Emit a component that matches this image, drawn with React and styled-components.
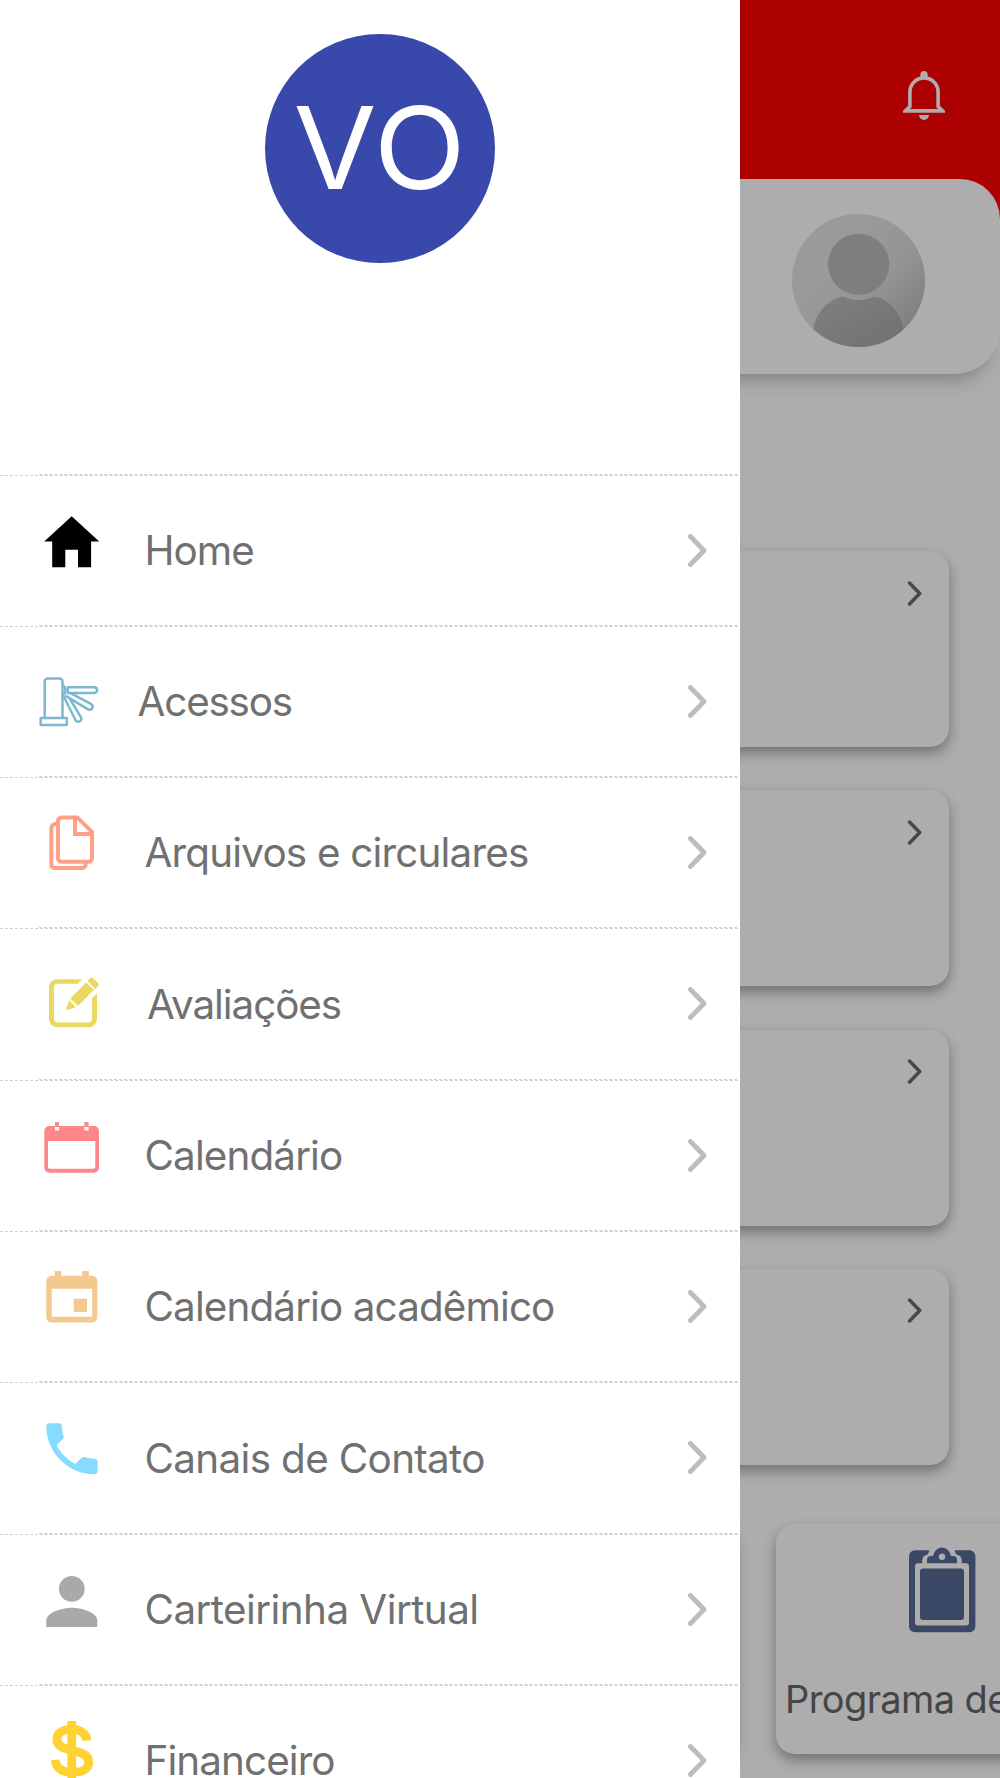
import React from "react";
import styled, { createGlobalStyle } from "styled-components";


const GlobalStyle = createGlobalStyle`
	* {
		box-sizing: border-box;
	}

	body {
		margin: 0;
		background: #fff;
		font-family: Inter, "Liberation Sans", sans-serif;
	}
`

const Screen = styled.div`
	position: relative;
	width: 1000px;
	height: 1778px;
	overflow: hidden;
	background: #fff;
`

const Header = styled.header`
	display: flex;
	justify-content: flex-end;
	height: 230px;
	padding: 71px 55px 0 0;
	background: #f00;
`

/* overlaps the bottom of the header so red shows behind the rounded corner */
const ProfileCard = styled.section`
	display: flex;
	justify-content: flex-end;
	align-items: center;
	height: 195px;
	margin-top: -51px;
	padding: 8px 75px 0 0;
	background: #fff;
	border-radius: 0 40px 45px 0;
	box-shadow: 0 17px 18px -11px rgba(0, 0, 0, 0.25);
`

const Page = styled.main`
	display: flex;
	flex-direction: column;
	gap: 43.3px;
	padding: 177px 51px 0 40px;
`

const Card = styled.section`
	display: flex;
	justify-content: flex-end;
	align-items: flex-start;
	height: 196px;
	padding: 29.5px 27.4px 0 0;
	border-radius: 19px;
	background: #fff;
	box-shadow: 0 6px 13px rgba(0, 0, 0, 0.35);
`

const Shortcuts = styled.div`
	display: flex;
	gap: 40px;
	width: 1200px;
	margin-top: 59px;
	padding-left: 40px;
`

const Shortcut = styled.section`
	display: flex;
	flex-direction: column;
	align-items: flex-start;
	flex: none;
	width: ${props => props.$width}px;
	height: 230px;
	padding: 23px 9px 0;
	border-radius: 19px;
	background: #fff;
	box-shadow: 0 6px 13px rgba(0, 0, 0, 0.35);

	svg {
		margin-left: 124px;
	}
`

const ShortcutName = styled.span`
	margin-top: 41px;
	font-size: 38px;
	line-height: 50px;
	letter-spacing: -0.6px;
	white-space: nowrap;
	color: #666;
`

const Backdrop = styled.div`
	position: absolute;
	inset: 0;
	background: rgba(0, 0, 0, 0.32);
`

const Drawer = styled.nav`
	position: absolute;
	top: 0;
	left: 0;
	width: 739.7px;
	height: 1778px;
	overflow: hidden;
	background: #fff;
`

const DrawerTop = styled.div`
	height: 473.5px;
	padding: 33.7px 0 0 265px;
`

const Avatar = styled.div`
	display: flex;
	align-items: center;
	justify-content: center;
	width: 229.5px;
	height: 229.5px;
	border-radius: 50%;
	background: #3949ab;
	color: #fff;
`

const Initials = styled.span`
	font-size: 114px;
	line-height: 1;
	letter-spacing: 1.2px;
	transform: scaleX(1.055);
`

const Divider = styled.div`
	height: 2px;
	background:
		repeating-linear-gradient(90deg, #d0d0d0 0 3px, transparent 3px 5px) 39px 0 / 699px 1px no-repeat,
		repeating-linear-gradient(90deg, #d0d0d0 0 3px, transparent 3px 5px) 0 1px / 738px 1px no-repeat;
`

const MenuRow = styled.div`
	display: flex;
	align-items: flex-start;
	height: 149.33px;
	padding: 31px 33px 0 38px;
`

const MenuLabel = styled.span`
	flex: 1;
	margin-left: ${props => 42.5 + (props.$shift || 0)}px;
	padding-top: 19.3px;
	font-size: 40.4px;
	line-height: 50px;
	letter-spacing: ${props => props.$spacing || 0}px;
	white-space: nowrap;
	color: #707070;
`

const ChevronSlot = styled.span`
	display: flex;
	padding-top: 27px;
`

const Chevron = ({ width, height, stroke, color }) => (
	<svg width={width} height={height} viewBox="0 0 20 33" fill="none" stroke={color} strokeWidth={stroke} strokeLinecap="round" strokeLinejoin="round">
		<path d="M3.4 2.5L17 16.5L3.4 30.5" />
	</svg>
)

const Icon = ({ children }) => (
	<svg width="64" height="72" viewBox="0 0 64 72" fill="none">{children}</svg>
)

const HomeIcon = () => (
	<Icon>
		<path fill="#000" d="M33.7 9.3L61.2 34.6H53.1V60.3H40V42.7H27.3V60.3H14.2V34.6H6.2Z" />
	</Icon>
)

const TurnstileIcon = () => (
	<Icon>
		<g stroke="#7cb9d1" strokeWidth="2.5" strokeLinejoin="round">
			<path d="M6.7 59.7V23.4a3 3 0 0 1 3-3H21.5a3 3 0 0 1 3 3V59.7" />
			<path d="M2.7 59.9H28.8V67.1H2.7Z" />
			<path d="M24.5 27A6.2 6.2 0 0 1 24.5 37.6" />
			<path d="M29.8 29.3H56.3a2.8 2.8 0 0 1 0 5.6H29.8Z" />
			<path d="M32.5 35.2L53.4 46.2a3.1 3.1 0 0 1-2.9 5.4L27.3 37.6" />
			<path d="M32 41L43 59.3a3.1 3.1 0 0 1-5.4 3L25.6 38.3" />
		</g>
	</Icon>
)

const FilesIcon = () => (
	<Icon>
		<g stroke="#ffa189" strokeWidth="4">
			<path d="M39.3 8.5H23.5a3.5 3.5 0 0 0-3.5 3.5V49.3a3.5 3.5 0 0 0 3.5 3.5H50.5a3.5 3.5 0 0 0 3.5-3.5V22.8Z" />
			<path d="M37 8.5V25.1H54" />
			<path d="M20 14.8H18.3a5 5 0 0 0-5 5V55.6a3.5 3.5 0 0 0 3.5 3.5H44.2a3.5 3.5 0 0 0 3.5-3.5V53" />
		</g>
	</Icon>
)

const EditIcon = () => (
	<Icon>
		<g fill="#ead961">
			<path d="M44.3 19.2H19a8 8 0 0 0-8 8v32a8 8 0 0 0 8 8h32a8 8 0 0 0 8-8V33.5l-5 5v20a4 4 0 0 1-4 4H20a4 4 0 0 1-4-4V27.8a4 4 0 0 1 4-4h19.7z" />
			<path d="M27.7 50.3L31 40.2L38 47.3Z" />
			<path d="M32.3 38.4L48 22.4L56 29.8L40 45.9Z" />
			<path d="M49.5 21L52.3 18.2a2 2 0 0 1 2.7 0L60.3 23.5a2 2 0 0 1 0 2.6L57.4 28.9Z" />
		</g>
	</Icon>
)

const CalendarIcon = () => (
	<Icon>
		<path fill="#ff8789" fillRule="evenodd" d="M11.3 14H56a5 5 0 0 1 5 5V55.7a5 5 0 0 1-5 5H11.3a5 5 0 0 1-5-5V19a5 5 0 0 1 5-5ZM10 29V54.7a2 2 0 0 0 2 2H55.3a2 2 0 0 0 2-2V29Z" />
		<path fill="#ff8789" d="M17 10H21V14H17ZM46.4 10H50.6V14H46.4Z" />
		<path fill="#fff" d="M17 15H21V18.5H17ZM46.4 15H50.6V18.5H46.4Z" />
	</Icon>
)

const EventIcon = () => (
	<Icon>
		<g fill="#f4c98f">
			<path fillRule="evenodd" d="M13.6 12.8H54a5.3 5.3 0 0 1 5.3 5.3V54.2a5.3 5.3 0 0 1-5.3 5.3H13.6a5.3 5.3 0 0 1-5.3-5.3V18.1a5.3 5.3 0 0 1 5.3-5.3ZM13.7 25.8V53.8H54.2V25.8Z" />
			<path d="M16.8 8.1H23.2V14H16.8ZM44.2 8.1H50.8V14H44.2Z" />
			<path d="M35.7 35.8H49V49.1H35.7Z" />
		</g>
	</Icon>
)

const PhoneIcon = () => (
	<Icon>
		<path
			fill="#85dcff"
			transform="translate(-.2 .6) scale(2.844)"
			d="M6.62 10.79c1.44 2.83 3.76 5.14 6.59 6.59l2.2-2.2c.27-.27.67-.36 1.02-.24 1.12.37 2.33.57 3.57.57.55 0 1 .45 1 1V20c0 .55-.45 1-1 1-9.39 0-17-7.61-17-17 0-.55.45-1 1-1h3.5c.55 0 1 .45 1 1 0 1.25.2 2.45.57 3.57.11.35.03.74-.25 1.02l-2.2 2.2z"
		/>
	</Icon>
)

const PersonIcon = () => (
	<Icon>
		<g fill="#a9a9a9">
			<circle cx="33.8" cy="22.8" r="12.9" />
			<path d="M8.3 61v-6.4c0-8.5 17-12.9 25.5-12.9s25.5 4.4 25.5 12.9V61z" />
		</g>
	</Icon>
)

const MoneyIcon = () => (
	<Icon>
		<g stroke="#ffd233" strokeWidth="8.8">
			<path d="M48.9 23.7C48.2 15.8 42 12.4 33.7 12.4C24.7 12.4 18.9 16 18.9 22C18.9 29.4 25.3 31.2 33.7 33.2C43.7 35.6 50.7 37.9 50.7 45.4C50.7 52 43.7 55.3 34.3 55.3C24 55.3 17.8 51 17.3 42.7" />
			<path d="M33.8 4V66" />
		</g>
	</Icon>
)

const BellIcon = () => (
	<svg width="42" height="50" viewBox="0 0 42 50">
		<path fill="none" stroke="#fff" strokeWidth="3.6" d="M6.9 35.5V21a14.1 14.1 0 0 1 28.2 0v14.5l4.4 4.4H2.5z" />
		<path fill="#fff" d="M17.4 8V3.6a3.6 3.6 0 0 1 7.2 0V8ZM16 44H26a5 5 0 0 1-10 0Z" />
	</svg>
)

const UserPhoto = () => (
	<svg width="133" height="133" viewBox="0 0 133 133">
		<defs>
			<linearGradient id="photo" x1="0.3" y1="0.3" x2="1" y2="0.9">
				<stop offset="0" stopColor="#e4e4e7" />
				<stop offset="0.45" stopColor="#d9dbdd" />
				<stop offset="1" stopColor="#b3b4b7" />
			</linearGradient>
			<linearGradient id="shape" x1="0" y1="0" x2="1" y2="1">
				<stop offset="0" stopColor="#bcbdbf" />
				<stop offset="1" stopColor="#a4a5a8" />
			</linearGradient>
			<clipPath id="round">
				<circle cx="66.5" cy="66.5" r="66.5" />
			</clipPath>
		</defs>
		<g clipPath="url(#round)">
			<rect width="133" height="133" fill="url(#photo)" />
			<circle cx="66.6" cy="50.3" r="30.6" fill="#b9babc" />
			<path fill="url(#shape)" d="M21 118C23 100 34 86 51 82.5C60 87 73 87 82 82.5C99 86 110 100 112 118V134H21Z" />
		</g>
	</svg>
)

const ClipboardIcon = () => (
	<svg width="67" height="86" viewBox="0 0 67 86">
		<rect y="3.3" width="66.4" height="82" rx="6" fill="#576b96" />
		<path fill="#fff" d="M20.5 2H45.5C46 6 47 7.5 48.5 8C51 8.6 52.7 10 52.7 13V18H13.3V13C13.3 10 15 8.6 17.5 8C19 7.5 20 6 20.5 2Z" />
		<rect x="6" y="16.3" width="54" height="62.3" rx="3" fill="#fff" />
		<rect x="11" y="21.4" width="44" height="51.6" rx="3" fill="#576b96" />
		<path fill="#576b96" d="M18 16.3V13a4 4 0 0 1 4-4H24.2C25 4 28.5.4 33 .4S41 4 42 9H44a4 4 0 0 1 4 4V16.3Z" />
		<circle cx="33" cy="9.8" r="3.2" fill="#fff" />
	</svg>
)

const menu = [
	{ name: "Home", icon: HomeIcon, spacing: -0.95 },
	{ name: "Acessos", icon: TurnstileIcon, shift: -6.9, spacing: -1.2 },
	{ name: "Arquivos e circulares", icon: FilesIcon, spacing: -0.8 },
	{ name: "Avaliações", icon: EditIcon, shift: 2.4, spacing: -1.05 },
	{ name: "Calendário", icon: CalendarIcon, spacing: -0.88 },
	{ name: "Calendário acadêmico", icon: EventIcon, spacing: -0.88 },
	{ name: "Canais de Contato", icon: PhoneIcon, spacing: -0.66 },
	{ name: "Carteirinha Virtual", icon: PersonIcon, spacing: -0.56 },
	{ name: "Financeiro", icon: MoneyIcon, spacing: -0.9 },
]

const App = () => (
	<Screen>
		<GlobalStyle />
		<Header>
			<BellIcon />
		</Header>
		<ProfileCard>
			<UserPhoto />
		</ProfileCard>
		<Page>
			{[1, 2, 3, 4].map(card => (
				<Card key={card}>
					<Chevron width={15} height={25} stroke={4.6} color="#6a6a6a" />
				</Card>
			))}
		</Page>
		<Shortcuts>
			<Shortcut $width={696} />
			<Shortcut $width={312}>
				<ClipboardIcon />
				<ShortcutName>Programa de</ShortcutName>
			</Shortcut>
		</Shortcuts>
		<Backdrop />
		<Drawer>
			<DrawerTop>
				<Avatar>
					<Initials>VO</Initials>
				</Avatar>
			</DrawerTop>
			{menu.map(({ name, icon: MenuIcon, shift, spacing }) => (
				<React.Fragment key={name}>
					<Divider />
					<MenuRow>
						<MenuIcon />
						<MenuLabel $shift={shift} $spacing={spacing}>{name}</MenuLabel>
						<ChevronSlot>
							<Chevron width={20} height={33} stroke={4.8} color="#bdbdbd" />
						</ChevronSlot>
					</MenuRow>
				</React.Fragment>
			))}
		</Drawer>
	</Screen>
);

export default App;
